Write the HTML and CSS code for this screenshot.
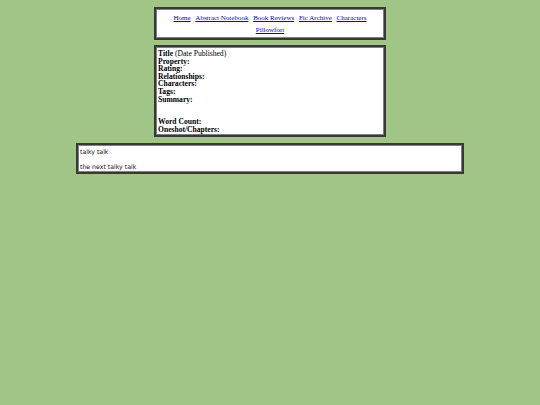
FILE: index.html
```html
<!DOCTYPE html>
<html>
<head>
<meta charset="utf-8">
<link rel="stylesheet" href="styles.css">
</head>
<body>
<div class="page">
  <div class="box nav">
    <a href="#">Home</a>
    <a href="#">Abstract Notebook</a>
    <a href="#">Book Reviews</a>
    <a href="#">Fic Archive</a>
    <a href="#">Characters</a>
    <br>
    <a href="#">Pillowfort</a>
  </div>
  <div class="box info">
    <div><b>Title</b> (Date Published)</div>
    <div><b>Property:</b></div>
    <div><b>Rating:</b></div>
    <div><b>Relationships:</b></div>
    <div><b>Characters:</b></div>
    <div><b>Tags:</b></div>
    <div><b>Summary:</b></div>
    <div class="blank"></div>
    <div class="blank"></div>
    <div><b>Word Count:</b></div>
    <div><b>Oneshot/Chapters:</b></div>
  </div>
  <div class="box talk">
    <p>talky talk</p>
    <p>the next talky talk</p>
  </div>
</div>
</body>
</html>
```
FILE: styles.css
```css
html, body {
  margin: 0;
  padding: 0;
  background: #a1c587;
}
.page {
  display: flex;
  flex-direction: column;
  align-items: center;
  padding-top: 7px;
}
.box {
  background: #fff;
  border: 2px solid #383838;
  box-shadow: inset 0 0 0 1px #808080;
  box-sizing: border-box;
}
.nav {
  width: 232px;
  height: 33px;
  font-family: "Liberation Serif", serif;
  font-size: 7px;
  line-height: 12px;
  text-align: center;
  padding-top: 3px;
}
.nav a {
  color: #0000ee;
  margin: 0 1.5px;
}
.info {
  margin-top: 5px;
  width: 232px;
  height: 92px;
  font-family: "Liberation Serif", serif;
  font-size: 7.6px;
  line-height: 7.6px;
  padding: 3px 2px;
  color: #000;
}
.blank {
  height: 7.6px;
}
.talk {
  margin-top: 6px;
  width: 388px;
  height: 31px;
  font-family: "DejaVu Sans", sans-serif;
  font-size: 6.2px;
  padding: 3px 2px;
  color: #111;
}
.talk p {
  margin: 0 0 7px 0;
  line-height: 8px;
}
```
